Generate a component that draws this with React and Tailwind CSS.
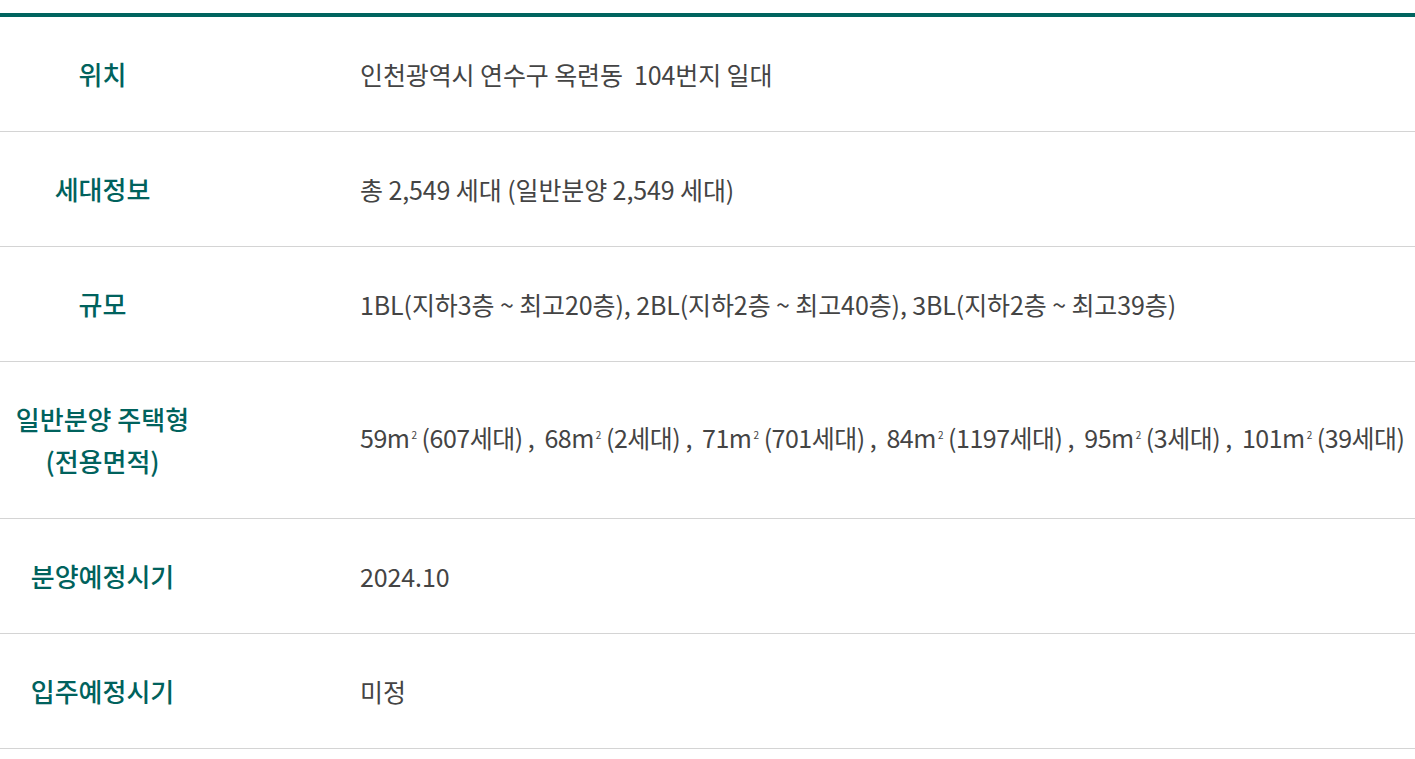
import React from 'react';

// ㎡ 표기: m + 작은 위첨자 2
const M2 = () => (
  <span>
    m<span className="relative -top-[9px] ml-[2px] text-[10px]">2</span>
  </span>
);

const types = [
  ['59', '607'],
  ['68', '2'],
  ['71', '701'],
  ['84', '1197'],
  ['95', '3'],
  ['101', '39'],
];

const rows = [
  { label: ['위치'], value: '인천광역시 연수구 옥련동\u00a0\u00a0104번지 일대' },
  { label: ['세대정보'], value: '총 2,549 세대 (일반분양 2,549 세대)' },
  { label: ['규모'], value: '1BL(지하3층 ~ 최고20층), 2BL(지하2층 ~ 최고40층), 3BL(지하2층 ~ 최고39층)' },
  {
    label: ['일반분양 주택형', '(전용면적)'],
    tight: true,
    value: types.map(([size, count], i) => (
      <React.Fragment key={i}>
        {i > 0 && ' ,  '}
        {size}
        <M2 /> ({count}세대)
      </React.Fragment>
    )),
  },
  { label: ['분양예정시기'], value: '2024.10' },
  { label: ['입주예정시기'], value: '미정' },
];

export default function App() {
  return (
    <div className="min-h-screen bg-white pt-[13px]" style={{ fontFamily: '"Noto Sans CJK KR", "Noto Sans", sans-serif' }}>
      <div className="border-t-4 border-[#00645f]">
        {rows.map((row, i) => (
          <div key={i} className="flex items-center border-b border-[#d4d4d4] py-[36px]">
            <div className="w-[205px] shrink-0 text-center text-[26px] font-medium leading-[42px] text-[#00625d]">
              {row.label.map((l, j) => (
                <div key={j}>{l}</div>
              ))}
            </div>
            <div
              className={
                'pl-[155px] text-[25px] leading-[42px] text-[#444444] whitespace-pre ' +
                (row.tight ? 'tracking-[-0.5px]' : 'tracking-[-0.1px]')
              }
            >
              {row.value}
            </div>
          </div>
        ))}
      </div>
    </div>
  );
}
